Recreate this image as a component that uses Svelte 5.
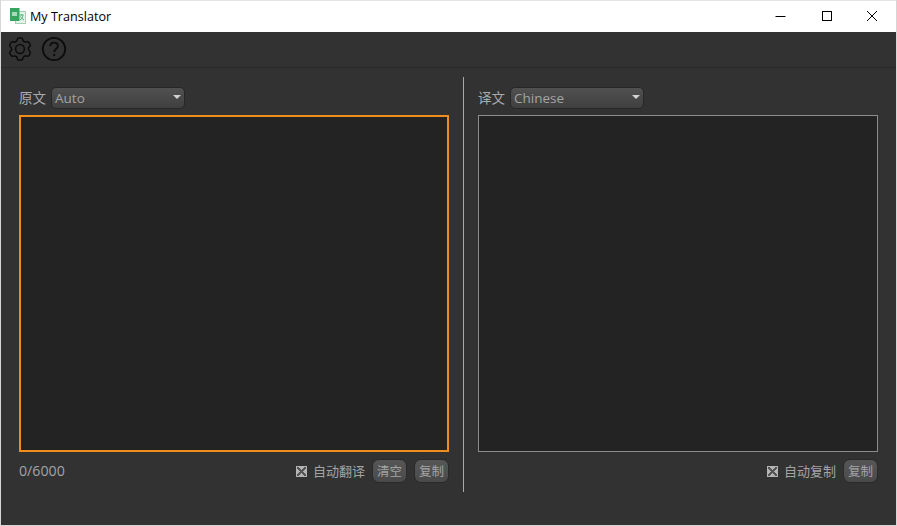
<script>
  let source = '';
  let target = '';
  let sourceLang = 'Auto';
  let targetLang = 'Chinese';

  // six rounded lobes round the centre of the 26px gear
  function gearPath() {
    const pts = [[-2.6, -10], [-2.4, -11], [-1.4, -11], [1.4, -11], [2.4, -11], [2.6, -10], [3.2, -7.9], [4.9, -6.6]];
    let d = '';
    for (let k = 0; k < 6; k++) {
      const a = (k * Math.PI) / 3;
      const [p0, c1, p1, p2, c2, p3, p4, c3] = pts.map(([x, y]) => [
        (13 + x * Math.cos(a) - y * Math.sin(a)).toFixed(2),
        (13 + x * Math.sin(a) + y * Math.cos(a)).toFixed(2)
      ]);
      d += `${k ? 'L' : 'M'}${p0} Q${c1} ${p1} L${p2} Q${c2} ${p3} L${p4} `;
      const nx = -2.6 * Math.cos(a + Math.PI / 3) + 10 * Math.sin(a + Math.PI / 3);
      const ny = -2.6 * Math.sin(a + Math.PI / 3) - 10 * Math.cos(a + Math.PI / 3);
      d += `Q${c3} ${(13 + nx).toFixed(2)},${(13 + ny).toFixed(2)} `;
    }
    return d + 'Z';
  }
</script>

<div class="window">
  <div class="titlebar">
    <svg class="logo" width="16" height="16" viewBox="0 0 16 16">
      <rect x="5.5" y="3.5" width="10" height="12" fill="#e4f3ea" stroke="#9fd3b4" />
      <rect x="0" y="0" width="9.5" height="13" fill="#33a760" />
      <rect x="2" y="4" width="5" height="4" fill="#a5dcb9" />
      <path d="M9.5 7 L13.5 7 M11.5 6 L11.5 7 M13 7 C12.5 10 11.5 11 10 12 M10.5 8.5 C11 10 12.5 11 14 12" fill="none" stroke="#4bb276" stroke-width="1" />
    </svg>
    <span class="title">My Translator</span>
    <div class="controls">
      <div class="ctl">
        <svg width="12" height="12" viewBox="0 0 12 12"><path d="M0.5 6.5 H10.5" stroke="#000" fill="none" /></svg>
      </div>
      <div class="ctl">
        <svg width="12" height="12" viewBox="0 0 12 12"><rect x="1.5" y="1.5" width="9" height="9" stroke="#000" fill="none" /></svg>
      </div>
      <div class="ctl">
        <svg width="12" height="12" viewBox="0 0 12 12"><path d="M1 1 L11 11 M11 1 L1 11" stroke="#000" fill="none" /></svg>
      </div>
    </div>
  </div>

  <div class="toolbar">
    <svg width="26" height="26" viewBox="0 0 26 26" fill="none" stroke="#0c0c0c" stroke-width="1.5" stroke-linejoin="round">
      <path d={gearPath()} />
      <circle cx="13" cy="13" r="4.4" />
    </svg>
    <svg width="26" height="26" viewBox="0 0 26 26" fill="none" stroke="#0c0c0c">
      <circle cx="13" cy="13" r="11.2" stroke-width="1.8" />
      <path d="M9.2 10.2 C9.2 7.8 11 6.6 13 6.6 C15.2 6.6 16.9 8 16.9 10 C16.9 12.6 13.2 13 13.2 16.2" stroke-width="1.8" />
      <path d="M13.2 18 V20" stroke-width="2" />
    </svg>
  </div>

  <div class="main">
    <section class="panel">
      <div class="lang">
        <span>原文</span>
        <div class="select">{sourceLang}<i></i></div>
      </div>
      <textarea class="box focused" bind:value={source}></textarea>
      <div class="foot">
        <span class="count">0/6000</span>
        <label class="check"><b class="mark"></b><span>自动翻译</span></label>
        <button>清空</button>
        <button>复制</button>
      </div>
    </section>

    <div class="divider"></div>

    <section class="panel right">
      <div class="lang">
        <span>译文</span>
        <div class="select">{targetLang}<i></i></div>
      </div>
      <textarea class="box" bind:value={target}></textarea>
      <div class="foot">
        <label class="check"><b class="mark"></b><span>自动复制</span></label>
        <button>复制</button>
      </div>
    </section>
  </div>
</div>

<style>
  :global(body) {
    background: #323232;
  }

  .window {
    width: 897px;
    height: 526px;
    box-sizing: border-box;
    display: flex;
    flex-direction: column;
    background: #323232;
    border-left: 1px solid #d6d6d6;
    border-right: 1px solid #d6d6d6;
    border-bottom: 1px solid #d6d6d6;
    font-family: "Noto Sans CJK SC", "Liberation Sans", sans-serif;
    color: #ababab;
    overflow: hidden;
  }

  .titlebar {
    height: 32px;
    flex: none;
    box-sizing: border-box;
    display: flex;
    align-items: center;
    background: #fff;
    padding-left: 9px;
    padding-bottom: 1px;
    border-top: 1px solid #e4e4e4;
  }

  .logo {
    margin-right: 4px;
    margin-top: -1px;
  }

  .title {
    font-family: "Open Sans", "Liberation Sans", sans-serif;
    font-size: 12.6px;
    color: #000;
  }

  .controls {
    margin-left: auto;
    padding-right: 1px;
    display: flex;
  }

  .ctl {
    width: 45.5px;
    height: 30px;
    display: flex;
    align-items: center;
    justify-content: center;
  }

  .toolbar {
    height: 36px;
    flex: none;
    box-sizing: border-box;
    display: flex;
    align-items: center;
    gap: 8px;
    padding: 0 0 2px 6px;
    border-bottom: 1px solid #282828;
  }

  .main {
    flex: 1;
    display: flex;
    padding: 9px 18px 33px 18px;
  }

  .panel {
    width: 430px;
    display: flex;
    flex-direction: column;
  }

  .panel.right {
    width: 400px;
  }

  .divider {
    width: 1px;
    margin: 0 14px;
    background: #a8a8a8;
  }

  .lang {
    height: 22px;
    margin-top: 10px;
    display: flex;
    align-items: center;
    gap: 5px;
    font-size: 13.5px;
  }

  .lang span {
    padding-bottom: 3px;
  }

  .select {
    position: relative;
    height: 20px;
    width: 129px;
    padding-left: 3px;
    border: 1px solid #272727;
    border-radius: 5px;
    background: linear-gradient(#515151, #3f3f3f);
    font-family: "Open Sans", "Liberation Sans", sans-serif;
    font-size: 13.5px;
    line-height: 20px;
    color: #a4a4a4;
  }

  .select i {
    position: absolute;
    right: 3px;
    top: 7px;
    border-left: 4px solid transparent;
    border-right: 4px solid transparent;
    border-top: 4px solid #d2d2d2;
  }

  .box {
    display: block;
    height: 337px;
    box-sizing: border-box;
    margin: 6px 0 0;
    padding: 4px;
    resize: none;
    outline: none;
    border: 1px solid #8c8c8c;
    background: #232323;
    color: #ccc;
  }

  .box.focused {
    border: 2px solid #ee8e1f;
  }

  .foot {
    height: 24px;
    margin-top: 7px;
    display: flex;
    align-items: center;
    justify-content: flex-end;
    gap: 7px;
    font-size: 13px;
  }

  .count {
    margin-right: auto;
    padding-bottom: 2px;
    font-family: "Open Sans", "Liberation Sans", sans-serif;
    font-size: 14.2px;
    color: #a4a4a4;
  }

  .check {
    display: flex;
    align-items: center;
    gap: 6px;
    color: #a4a4a4;
  }

  .check span {
    padding-bottom: 2px;
  }

  .mark {
    width: 11px;
    height: 11px;
    box-sizing: border-box;
    border: 1px solid #b4b4b4;
    background:
      linear-gradient(45deg, transparent 40%, #555 40%, #555 60%, transparent 60%),
      linear-gradient(-45deg, transparent 40%, #555 40%, #555 60%, transparent 60%),
      #b4b4b4;
  }

  button {
    width: 35px;
    height: 24px;
    padding: 0 0 2px;
    border: 1px solid #2a2a2a;
    border-radius: 7px;
    background: linear-gradient(#565656, #4a4a4a);
    color: #a4a4a4;
    font-family: inherit;
    font-size: 12.5px;
  }
</style>
